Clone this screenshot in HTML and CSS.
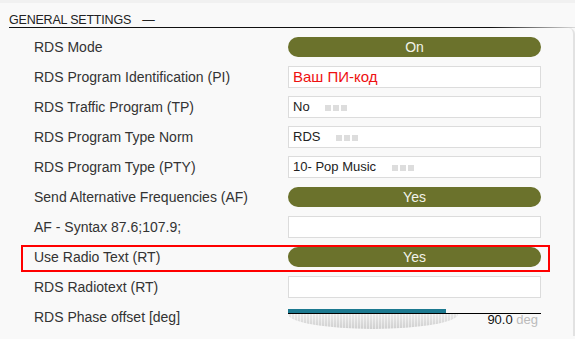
FILE: index.html
```html
<!DOCTYPE html>
<html lang="en">
<head>
    <meta charset="UTF-8">
    <title>General Settings</title>
    <link rel="stylesheet" href="styles.css">
</head>
<body>
    <div class="panel">
        <div class="section-title">GENERAL SETTINGS <span class="dash">&mdash;</span></div>

        <div class="settings">
            <div class="row">
                <span class="label">RDS Mode</span>
                <div class="toggle">On</div>
            </div>
            <div class="row">
                <span class="label">RDS Program Identification (PI)</span>
                <div class="field field-red">Ваш ПИ-код</div>
            </div>
            <div class="row">
                <span class="label">RDS Traffic Program (TP)</span>
                <div class="field">No <span class="dots"><i></i><i></i><i></i></span></div>
            </div>
            <div class="row">
                <span class="label">RDS Program Type Norm</span>
                <div class="field">RDS <span class="dots"><i></i><i></i><i></i></span></div>
            </div>
            <div class="row">
                <span class="label">RDS Program Type (PTY)</span>
                <div class="field">10- Pop Music <span class="dots"><i></i><i></i><i></i></span></div>
            </div>
            <div class="row">
                <span class="label">Send Alternative Frequencies (AF)</span>
                <div class="toggle">Yes</div>
            </div>
            <div class="row">
                <span class="label">AF - Syntax 87.6;107.9;</span>
                <div class="field"></div>
            </div>
            <div class="row row-marked">
                <span class="label">Use Radio Text (RT)</span>
                <div class="toggle">Yes</div>
            </div>
            <div class="row">
                <span class="label">RDS Radiotext (RT)</span>
                <div class="field"></div>
            </div>
            <div class="row">
                <span class="label">RDS Phase offset [deg]</span>
                <div class="slider">
                    <div class="slider-track">
                        <div class="slider-fill" style="width: 62.5%;"></div>
                    </div>
                    <div class="slider-base"></div>
                    <div class="slider-value">90.0 <span class="unit">deg</span></div>
                </div>
            </div>
        </div>
    </div>
</body>
</html>
```

FILE: styles.css
```css
body {
    margin: 0;
    background-color: #f9f9f9;
    border-top: 3px solid #f1f1f1;
    font-family: "Liberation Sans", Arial, sans-serif;
    color: #333333;
}

.panel {
    height: 336px;
    padding-left: 9px;
    box-sizing: border-box;
}

.section-title {
    height: 25px;
    padding-top: 10px;
    box-sizing: border-box;
    font-size: 12.5px;
    line-height: 14px;
    letter-spacing: -0.2px;
    color: #222222;
    border-bottom: 1px solid;
    border-image: linear-gradient(to right, #111111 85%, #dddddd) 1;
}

.section-title .dash {
    margin-left: 8px;
}

.settings {
    padding-top: 4px;
    border-right: 2px solid #e2e2e2;
    border-top-right-radius: 6px;
    height: 308px;
    box-sizing: border-box;
}

.row {
    display: grid;
    grid-template-columns: 254px 253px;
    align-items: center;
    height: 30px;
    padding-left: 25px;
    font-size: 14px;
}

.row-marked {
    position: relative;
}

.row-marked::after {
    content: "";
    position: absolute;
    left: 12px;
    top: 3px;
    width: 529px;
    height: 27px;
    border: 2px solid #ff0000;
    box-sizing: border-box;
}

.toggle {
    height: 20px;
    border-radius: 10px;
    background-color: #6b722c;
    color: #f2f2ea;
    text-align: center;
    line-height: 20px;
    font-size: 14px;
}

.field {
    height: 22px;
    border: 1px solid #dcdcdc;
    background-color: #ffffff;
    box-sizing: border-box;
    padding-left: 4px;
    line-height: 20px;
    font-size: 13px;
    color: #222222;
}

.field-red {
    color: #ee1111;
    font-size: 15px;
}

.dots {
    margin-left: 12px;
}

.dots i {
    display: inline-block;
    width: 6px;
    height: 6px;
    margin-right: 2px;
    background-color: #dddddd;
}

.slider {
    position: relative;
    height: 30px;
}

.slider-track {
    margin-top: 7px;
    height: 4px;
    border-bottom: 1px solid #000000;
}

.slider-fill {
    height: 4px;
    background-color: #1c7990;
}

.slider-base {
    width: 170px;
    height: 15px;
    border-radius: 0 0 50% 50% / 0 0 100% 100%;
    background:
        repeating-linear-gradient(to right, rgba(255, 255, 255, 0.5) 0 1px, transparent 1px 3px),
        linear-gradient(to bottom, #e8e8e8, #cfcfcf);
}

.slider-value {
    position: absolute;
    right: 3px;
    top: 10px;
    font-size: 13px;
    color: #111111;
}

.slider-value .unit {
    color: #bbbbbb;
}
```
